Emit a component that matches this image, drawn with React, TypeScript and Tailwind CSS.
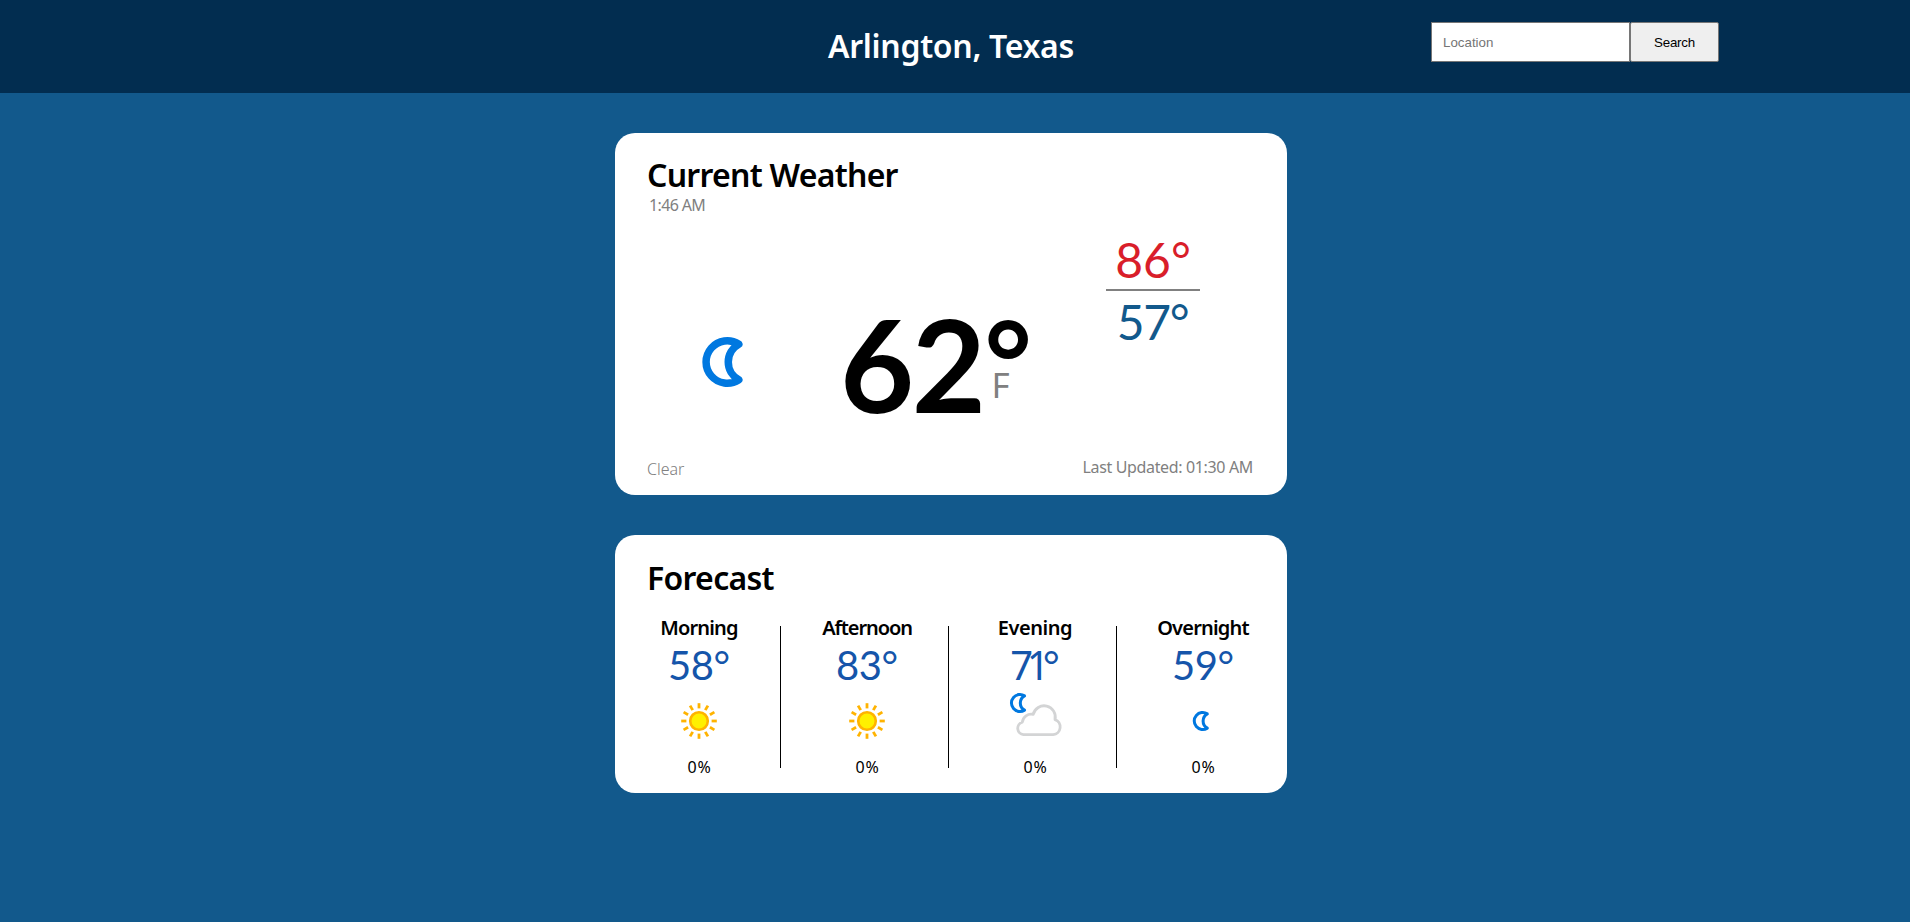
type Kind = "sun" | "moon" | "cloudMoon";

const periods: { name: string; nameClass: string; temp: string; tempClass: string; kind: Kind; rain: string }[] = [
  { name: "Morning", nameClass: "tracking-[-0.85px]", temp: "58", tempClass: "tracking-[-0.5px]", kind: "sun", rain: "0%" },
  { name: "Afternoon", nameClass: "tracking-[-1.1px]", temp: "83", tempClass: "tracking-[-0.5px]", kind: "sun", rain: "0%" },
  { name: "Evening", nameClass: "tracking-[-0.45px]", temp: "71", tempClass: "font-['Noto_Sans',sans-serif] tracking-[-6.5px]", kind: "cloudMoon", rain: "0%" },
  { name: "Overnight", nameClass: "tracking-[-0.8px]", temp: "59", tempClass: "tracking-[-0.5px]", kind: "moon", rain: "0%" },
];

const MOON = "M36.8 7.2A21.2 21.2 0 1 0 36.8 42.8A20.3 20.3 0 0 1 36.8 7.2Z";

function Moon({ className }: { className: string }) {
  return (
    <svg viewBox="0 0 41 50" className={className} fill="none">
      <path d={MOON} stroke="#0078e0" strokeWidth="7.5" strokeLinejoin="round" />
    </svg>
  );
}

function WeatherIcon({ kind }: { kind: Kind }) {
  return (
    <svg viewBox="0 0 60 60" className="block h-[60px] w-[60px]" fill="none">
      {kind === "sun" && (
        <g stroke="#ffb300">
          <circle cx="30" cy="30" r="8.8" fill="#fff000" strokeWidth="2.6" />
          {Array.from({ length: 12 }, (_, i) => (
            <path key={i} d="M30 12.2V17.4" strokeWidth="2.8" transform={`rotate(${i * 30} 30 30)`} />
          ))}
        </g>
      )}
      {kind === "moon" && (
        <path d={MOON} stroke="#0078e0" strokeWidth="7.5" strokeLinejoin="round" transform="translate(19.6 20) scale(0.4)" />
      )}
      {kind === "cloudMoon" && (
        <>
          <path d={MOON} stroke="#0078e0" strokeWidth="7.5" strokeLinejoin="round" transform="translate(4.8 2) scale(0.4)" />
          <path
            d="M18.5 43.7A6.4 6.4 0 0 1 17.3 31.2A9 9 0 0 1 28.2 23.4A11.2 11.2 0 0 1 50 28.6A7.8 7.8 0 0 1 48.2 43.7Z"
            stroke="#d3d4d5"
            strokeWidth="2.8"
            strokeLinejoin="round"
          />
        </>
      )}
    </svg>
  );
}

export default function App() {
  return (
    <div className="min-h-screen bg-[#12598c] font-['Noto_Sans',sans-serif] text-black">
      <header className="grid h-[93px] w-full grid-cols-[1431px_1fr] bg-[#022d50]">
        <h1 className="pl-[828px] text-[32px] leading-[91px] font-semibold tracking-[-0.3px] text-white">Arlington, Texas</h1>
        <form className="flex pt-[22px] font-['Liberation_Sans',sans-serif] text-[13.333px]">
          <input
            placeholder="Location"
            className="h-10 w-[199px] border border-[#767676] bg-white px-[11px] placeholder:text-[#757575]"
          />
          <button
            type="button"
            className="h-10 w-[89px] rounded-[2px] border border-[#767676] bg-[#efefef] pt-0.5 tracking-[-0.2px]"
          >
            Search
          </button>
        </form>
      </header>

      <main className="flex w-[1902px] flex-col items-center gap-10 pt-10">
        <section className="flex h-[362px] w-[672px] flex-col rounded-[20px] bg-white px-8 pt-[22px] pb-[14px]">
          <h2 className="text-[32px] leading-10 font-semibold tracking-[-0.73px]">Current Weather</h2>
          <p className="-mt-0.5 pl-0.5 text-base leading-6 tracking-[-0.65px] text-[#808080]">1:46 AM</p>
          <div className="flex flex-1 items-start">
            <Moon className="mt-[120px] ml-[55px] block h-[50px] w-[41px] shrink-0" />
            <div className="mt-[83px] ml-[97px] flex w-[200px] shrink-0 font-['Lato',sans-serif] font-bold">
              <p className="text-[128px] leading-none tracking-[-2.5px]">62</p>
              <div className="ml-px flex flex-col pt-[3px]">
                <p className="h-[64px] text-[114px] leading-[114px]">°</p>
                <p className="pl-[7px] font-['Noto_Sans',sans-serif] text-[35px] leading-9 font-normal text-[#808080]">F</p>
              </div>
            </div>
            <div className="mt-[19px] ml-[66px] w-[94px] text-center font-['Lato',sans-serif] text-[48px] leading-[48px]">
              <p className="text-[#d91e2a]">86°</p>
              <p className="mt-[5px] border-t-2 border-[#808080] pt-[7px] pr-px tracking-[-1.3px] text-[#12598c]">57°</p>
            </div>
          </div>
          <div className="flex items-start justify-between pr-0.5 text-base text-[#808080]">
            <span className="leading-6 font-light">Clear</span>
            <span className="leading-5 tracking-[-0.35px]">Last Updated: 01:30 AM</span>
          </div>
        </section>

        <section className="h-[258px] w-[672px] rounded-[20px] bg-white pt-[23px]">
          <h2 className="pl-8 text-[32px] leading-10 font-semibold tracking-[-0.7px]">Forecast</h2>
          <div className="-ml-0.5 flex pt-[17px]">
            {periods.map((p, i) => (
              <div key={p.name} className="flex w-[168px] shrink-0">
                <div className="flex w-[167px] flex-col items-center pt-px pl-[5px]">
                  <h3 className={`text-xl leading-6 font-semibold ${p.nameClass}`}>{p.name}</h3>
                  <p className="mt-px h-12 font-['Lato',sans-serif] text-[40px] leading-[48px] text-[#1555aa]">
                    <span className={p.tempClass}>{p.temp}</span>°
                  </p>
                  <div className="mt-0.5">
                    <WeatherIcon kind={p.kind} />
                  </div>
                  <p className="mt-1 pl-px text-base leading-6 tracking-[0.7px]">{p.rain}</p>
                </div>
                {i < periods.length - 1 && <div className="mt-[11px] h-[142px] w-px bg-black" />}
              </div>
            ))}
          </div>
        </section>
      </main>
    </div>
  );
}
